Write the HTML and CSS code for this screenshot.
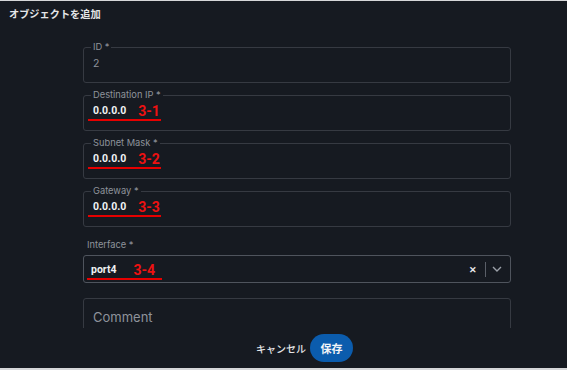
FILE: index.html
```html
<!DOCTYPE html>
<html lang="ja">
<head>
  <meta charset="UTF-8">
  <meta name="viewport" content="width=device-width, initial-scale=1.0">
  <title>オブジェクトを追加</title>
  <link rel="stylesheet" href="styles.css">
</head>
<body>
  <div class="dialog">
    <div class="dialog-header">オブジェクトを追加</div>

    <div class="dialog-body">
      <form class="form">
        <fieldset class="field">
          <legend>ID *</legend>
          <div class="field-value muted">2</div>
        </fieldset>

        <fieldset class="field">
          <legend>Destination IP *</legend>
          <div class="field-value">
            <span class="mark"><b>0.0.0.0</b><span class="tag">3-1</span></span>
          </div>
        </fieldset>

        <fieldset class="field">
          <legend>Subnet Mask *</legend>
          <div class="field-value">
            <span class="mark"><b>0.0.0.0</b><span class="tag">3-2</span></span>
          </div>
        </fieldset>

        <fieldset class="field">
          <legend>Gateway *</legend>
          <div class="field-value">
            <span class="mark"><b>0.0.0.0</b><span class="tag">3-3</span></span>
          </div>
        </fieldset>

        <div class="select-group">
          <label class="select-label">Interface *</label>
          <div class="select">
            <span class="mark mark-port"><b>port4</b><span class="tag">3-4</span></span>
            <span class="select-clear">✕</span>
            <span class="select-sep"></span>
            <svg class="select-arrow" width="10" height="6" viewBox="0 0 10 6">
              <path d="M1 1l4 4 4-4" fill="none" stroke="#9ba0a8" stroke-width="1.4"/>
            </svg>
          </div>
        </div>

        <div class="comment">Comment</div>
      </form>
    </div>

    <div class="dialog-footer">
      <button type="button" class="btn-cancel">キャンセル</button>
      <button type="button" class="btn-save">保存</button>
    </div>
  </div>
</body>
</html>
```

FILE: styles.css
```css
html, body {
  height: 370px;
}

body {
  margin: 0;
  background-color: #d6d7d9;
  font-family: "Inter", "Noto Sans CJK JP", sans-serif;
  overflow: hidden;
}

.dialog {
  margin-top: 1px;
  height: 367px;
  background-color: #161a21;
  display: flex;
  flex-direction: column;
}

.dialog-header {
  height: 27px;
  box-sizing: border-box;
  padding: 6px 0 0 9px;
  font-family: "Noto Sans CJK JP", sans-serif;
  font-size: 10.2px;
  font-weight: bold;
  line-height: 14px;
  color: #e4e5e7;
}

.dialog-body {
  height: 300px;
  overflow: hidden;
  padding: 13px 0 0 83px;
  box-sizing: border-box;
}

.form {
  width: 428px;
}

.field {
  margin: 0 0 6px;
  padding: 0 9px 10px;
  border: 1px solid #363a42;
  border-radius: 3px;
  min-width: 0;
}

.field legend {
  padding: 0 2px;
  margin-left: -2px;
  font-size: 9.3px;
  line-height: 12px;
  color: #8e939b;
}

.field-value {
  display: flex;
  align-items: center;
  height: 18px;
  padding-top: 1px;
  font-size: 11px;
  color: #eceef0;
}

.muted {
  color: #8e939b;
  font-size: 10.5px;
}

.mark {
  display: inline-flex;
  align-items: center;
  margin-left: -5px;
  padding: 0 1px 1px 5px;
  height: 15px;
  border-bottom: 2px solid #e60000;
  margin-top: 2px;
}

.mark b {
  font-family: "Roboto", sans-serif;
  font-weight: 700;
  font-size: 10.5px;
  color: #f0f1f3;
}

.tag {
  margin-left: 12px;
  font-family: "Roboto", sans-serif;
  font-size: 14px;
  font-weight: 700;
  color: #ee1111;
}

.select-group {
  margin-top: 12px;
}

.select-label {
  display: block;
  padding-left: 4px;
  font-size: 9.3px;
  line-height: 12px;
  color: #8e939b;
  margin-bottom: 4px;
}

.select {
  display: flex;
  align-items: center;
  height: 28px;
  box-sizing: border-box;
  padding: 0 8px 0 7px;
  border: 1px solid #4f545d;
  border-radius: 3px;
}

.mark-port {
  margin-left: -4px;
  padding-left: 4px;
  padding-right: 7px;
  margin-top: 4px;
}

.mark-port .tag {
  margin-left: 17px;
}

.select-clear {
  margin-left: auto;
  font-size: 9px;
  font-weight: bold;
  color: #e8e9eb;
}

.select-sep {
  width: 1px;
  height: 15px;
  margin: 0 6px 0 8px;
  background-color: #5a5f68;
}

.comment {
  margin-top: 15px;
  height: 60px;
  box-sizing: border-box;
  padding: 10px 0 0 9px;
  border: 1px solid #363a42;
  border-radius: 3px;
  font-size: 13px;
  line-height: 16px;
  color: #8e939b;
}

.dialog-footer {
  display: flex;
  justify-content: center;
  align-items: center;
  gap: 4px;
  padding: 6px 0 0 42px;
}

.btn-cancel {
  background: none;
  border: none;
  padding: 0;
  font-family: "Noto Sans CJK JP", sans-serif;
  font-size: 10px;
  font-weight: 500;
  color: #e4e5e7;
  cursor: pointer;
}

.btn-save {
  width: 43px;
  height: 28px;
  border: none;
  border-radius: 14px;
  background-color: #0b5cad;
  font-family: "Noto Sans CJK JP", sans-serif;
  font-size: 11px;
  font-weight: bold;
  color: #f2f4f7;
  cursor: pointer;
}
```
